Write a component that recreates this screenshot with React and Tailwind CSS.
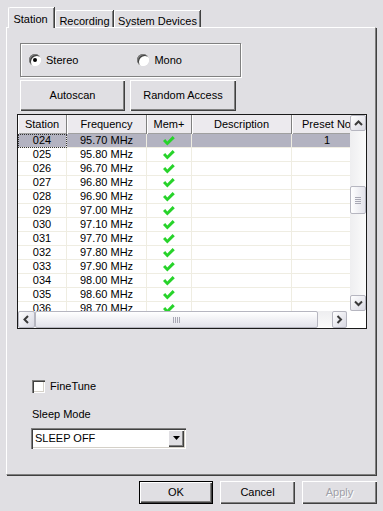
import React from 'react'

const raised = "shadow-[inset_1px_1px_0_#ffffff,inset_-1px_-1px_0_#404040,inset_-2px_-2px_0_#808080]"
const sunken = "shadow-[inset_1px_1px_0_#808080,inset_2px_2px_0_#404040,inset_-1px_-1px_0_#ffffff,inset_-2px_-2px_0_#d4d0c8]"

const rows = [
    ["024", "95.70 MHz", "1"],
    ["025", "95.80 MHz", ""],
    ["026", "96.70 MHz", ""],
    ["027", "96.80 MHz", ""],
    ["028", "96.90 MHz", ""],
    ["029", "97.00 MHz", ""],
    ["030", "97.10 MHz", ""],
    ["031", "97.70 MHz", ""],
    ["032", "97.80 MHz", ""],
    ["033", "97.90 MHz", ""],
    ["034", "98.00 MHz", ""],
    ["035", "98.60 MHz", ""],
    ["036", "98.70 MHz", ""],
]

const Check = () => (
    <svg width="12" height="10" viewBox="0 0 12 10">
        <polygon points="0,5 2.2,3 4.3,5.4 9.6,0 11.8,2.2 4.3,9.6" fill="#27d32a" />
    </svg>
)

const Arrow = ({ dir }) => {
    const d = {
        up: "M1 5 L4.5 1.5 L8 5",
        down: "M1 1.5 L4.5 5 L8 1.5",
        left: "M5 1 L1.5 4.5 L5 8",
        right: "M1.5 1 L5 4.5 L1.5 8",
    }[dir]
    const vert = dir === "up" || dir === "down"
    return (
        <svg width={vert ? 9 : 7} height={vert ? 7 : 9} viewBox={vert ? "0 0 9 7" : "0 0 7 9"}>
            <path d={d} fill="none" stroke="#3a3a3a" strokeWidth="2" />
        </svg>
    )
}

const ScrollBtn = ({ dir, className }) => (
    <div className={"flex items-center justify-center rounded-[2px] border border-[#b6b6c0] bg-gradient-to-br from-white to-[#d8d8e2] " + className}>
        <Arrow dir={dir} />
    </div>
)

const Button = ({ children, className, disabled }) => (
    <div className={"flex items-center justify-center bg-[#e0dfe3] " + raised + " " + className}>
        <span className={disabled ? "text-[#a0a0a8] [text-shadow:1px_1px_0_#ffffff]" : ""}>{children}</span>
    </div>
)

const widths = ["w-[49px]", "w-[80px]", "w-[45px]", "w-[100px]", "w-[70px]"]
const headers = ["Station", "Frequency", "Mem+", "Description", "Preset No"]

const App = () => {
    return (
        <div className="w-[383px] h-[511px] bg-[#e0dfe3] font-['Liberation_Sans',Arial,sans-serif] text-[11px] text-black overflow-hidden select-none">
            {/* tabs */}
            <div className="flex items-end h-[27px] pl-[8px]">
                <div className="relative z-10 w-[46px] h-[21px] -mb-[1px] bg-[#e0dfe3] border-t border-l border-white rounded-tl-[2px] shadow-[inset_-1px_0_0_#808080,1px_0_0_#404040] flex items-start justify-center pt-[3px] pr-[2px]">
                    Station
                </div>
                <div className="ml-[1px] w-[58px] h-[17px] border-t border-l border-white rounded-tl-[2px] shadow-[inset_-1px_0_0_#808080,1px_0_0_#404040] flex items-start justify-center pt-[2px]">
                    Recording
                </div>
                <div className="ml-[1px] w-[86px] h-[17px] border-t border-l border-white rounded-tl-[2px] shadow-[inset_-1px_0_0_#808080,1px_0_0_#404040] flex items-start justify-center pt-[2px]">
                    System Devices
                </div>
            </div>

            {/* tab pane */}
            <div className="ml-[6px] w-[370px] h-[448px] border-t border-l border-white border-r border-r-[#808080] border-b border-b-[#808080] shadow-[1px_1px_0_#404040] flex flex-col">
                {/* radio group */}
                <div className="ml-[13px] mt-[15px] w-[221px] h-[34px] border border-[#808080] shadow-[inset_1px_1px_0_#ffffff,1px_1px_0_#ffffff] flex items-center">
                    <div className="flex items-center ml-[8px]">
                        <div className="w-[12px] h-[12px] rounded-full bg-white flex items-center justify-center shadow-[inset_1px_1px_0_#808080,inset_-1px_-1px_0_#ffffff,inset_2px_2px_0_#404040]">
                            <div className="w-[4px] h-[4px] rounded-full bg-black" />
                        </div>
                        <span className="ml-[5px]">Stereo</span>
                    </div>
                    <div className="flex items-center ml-[59px]">
                        <div className="w-[12px] h-[12px] rounded-full bg-white shadow-[inset_1px_1px_0_#808080,inset_-1px_-1px_0_#ffffff,inset_2px_2px_0_#404040]" />
                        <span className="ml-[5px]">Mono</span>
                    </div>
                </div>

                {/* buttons */}
                <div className="flex ml-[13px] mt-[3px] gap-[5px]">
                    <Button className="w-[105px] h-[31px]">Autoscan</Button>
                    <Button className="w-[106px] h-[31px]">Random Access</Button>
                </div>

                {/* list view */}
                <div className="ml-[10px] mt-[3px] w-[350px] h-[215px] border border-[#1a1a1a] bg-white grid grid-cols-[332px_16px] grid-rows-[196px_17px]">
                    <div className="overflow-hidden">
                        <div className="flex h-[19px] w-max bg-[#eceaee]">
                            {headers.map((h, i) => (
                                <div key={h} className={widths[i] + " shrink-0 h-full flex items-center justify-center border-r border-r-[#808080] shadow-[inset_1px_0_0_#ffffff,inset_0_-1px_0_#a0a0a0]"}>
                                    {h}
                                </div>
                            ))}
                        </div>
                        {rows.map((r, idx) => {
                            const sel = idx === 0
                            return (
                                <div key={r[0]} className={"flex h-[14px] w-max " + (sel ? "bg-[#b3b3c1]" : "")}>
                                    <div className={widths[0] + " shrink-0 flex items-center justify-center border-r border-b border-[#efede2] " + (sel ? "outline outline-1 outline-dotted outline-[#333] -outline-offset-1" : "")}>{r[0]}</div>
                                    <div className={widths[1] + " shrink-0 flex items-center justify-center border-r border-b border-[#efede2]"}>{r[1]}</div>
                                    <div className={widths[2] + " shrink-0 flex items-center justify-center border-r border-b border-[#efede2]"}><Check /></div>
                                    <div className={widths[3] + " shrink-0 flex items-center justify-center border-r border-b border-[#efede2]"}></div>
                                    <div className={widths[4] + " shrink-0 flex items-center justify-center border-b border-[#efede2]"}>{r[2]}</div>
                                </div>
                            )
                        })}
                    </div>

                    {/* vertical scrollbar */}
                    <div className="flex flex-col bg-gradient-to-r from-[#eeeef0] to-[#fbfbfb]">
                        <ScrollBtn dir="up" className="w-[16px] h-[16px] shrink-0" />
                        <div className="flex-1">
                            <div className="mt-[55px] h-[28px] rounded-[2px] border border-[#b6b6c0] bg-gradient-to-r from-white to-[#e2e2ea] flex flex-col items-center justify-center gap-[1px]">
                                <div className="w-[6px] h-px bg-[#a8a8b4]" />
                                <div className="w-[6px] h-px bg-[#a8a8b4]" />
                                <div className="w-[6px] h-px bg-[#a8a8b4]" />
                                <div className="w-[6px] h-px bg-[#a8a8b4]" />
                            </div>
                        </div>
                        <ScrollBtn dir="down" className="w-[16px] h-[16px] shrink-0" />
                    </div>

                    {/* horizontal scrollbar */}
                    <div className="flex w-[329px] bg-gradient-to-b from-[#eeeef0] to-[#fbfbfb]">
                        <ScrollBtn dir="left" className="w-[17px] h-full shrink-0" />
                        <div className="w-[283px] h-full rounded-[2px] border border-[#b6b6c0] bg-gradient-to-b from-white to-[#e2e2ea] flex items-center justify-center gap-[1px]">
                            <div className="w-px h-[6px] bg-[#a8a8b4]" />
                            <div className="w-px h-[6px] bg-[#a8a8b4]" />
                            <div className="w-px h-[6px] bg-[#a8a8b4]" />
                            <div className="w-px h-[6px] bg-[#a8a8b4]" />
                        </div>
                        <div className="flex-1" />
                        <ScrollBtn dir="right" className="w-[15px] h-full shrink-0" />
                    </div>
                    <div className="bg-white" />
                </div>

                {/* fine tune */}
                <div className="flex items-center ml-[25px] mt-[49px]">
                    <div className={"w-[13px] h-[13px] bg-white " + sunken} />
                    <span className="ml-[5px]">FineTune</span>
                </div>

                <div className="ml-[25px] mt-[13px] leading-[13px]">Sleep Mode</div>

                <div className={"ml-[24px] mt-[7px] w-[155px] h-[21px] bg-white flex items-center justify-between pl-[4px] pr-[2px] " + sunken}>
                    <span>SLEEP OFF</span>
                    <div className={"w-[16px] h-[17px] bg-[#e0dfe3] flex items-center justify-center " + raised}>
                        <svg width="7" height="4" viewBox="0 0 7 4"><polygon points="0,0 7,0 3.5,4" fill="#000" /></svg>
                    </div>
                </div>
            </div>

            {/* bottom buttons */}
            <div className="flex justify-end gap-[7px] pr-[6px] mt-[6px]">
                <Button className="w-[74px] h-[23px] outline outline-1 outline-black -outline-offset-1 shadow-[inset_2px_2px_0_#ffffff,inset_-2px_-2px_0_#404040,inset_-3px_-3px_0_#808080]">OK</Button>
                <Button className="w-[75px] h-[23px]">Cancel</Button>
                <Button className="w-[75px] h-[23px]" disabled>Apply</Button>
            </div>
        </div>
    )
}

export default App
